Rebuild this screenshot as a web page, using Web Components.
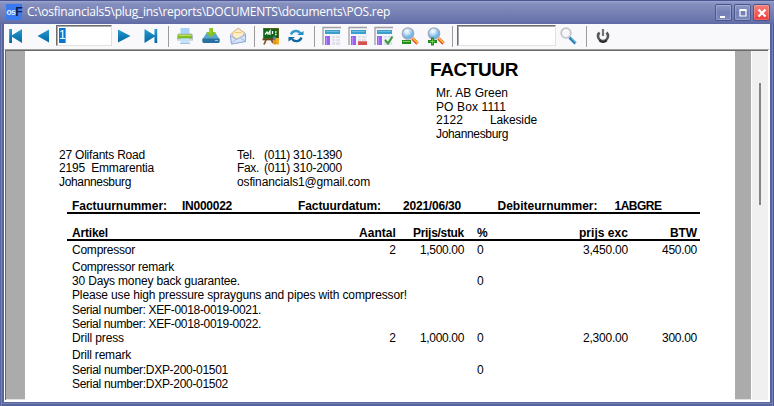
<!DOCTYPE html>
<html lang="nl">
<head>
<meta charset="utf-8">
<title>POS.rep</title>
<style>
html,body{margin:0;width:774px;height:406px;overflow:hidden;background:#fff}
body{font-family:"Liberation Sans",Arial,sans-serif;font-size:12px;color:#000}
</style>
</head>
<body>
<report-window></report-window>
<script>
const define = (name, html, setup) => customElements.define(name, class extends HTMLElement {
  connectedCallback() {
    if (this.shadowRoot) return;
    this.attachShadow({mode: 'open'}).innerHTML = typeof html === 'function' ? html(this) : html;
    if (setup) setup(this);
  }
});

/* Text that spreads its letters to fill the width in its "w" attribute */
define('fit-text', '<style>:host{display:block;width:max-content;white-space:pre}span{display:inline-block}</style><span><slot></slot></span>', el => {
  const w = +el.getAttribute('w');
  if (!w) return;
  const span = el.shadowRoot.querySelector('span');
  const n = el.textContent.length;
  const ls = (w - span.getBoundingClientRect().width) / n;
  span.style.letterSpacing = ls.toFixed(3) + 'px';
});

const blue = '<defs><linearGradient id="b" x2="0" y2="1"><stop stop-color="#2a9dcf"/><stop offset=".5" stop-color="#137fb9"/><stop offset="1" stop-color="#07679f"/></linearGradient></defs>';
const table = '<path d="M1 2h18v17H1z" fill="#f4f5fa"/><path d="M1 19V1.500H19" fill="none" stroke="#a0a0a4" stroke-width="1.300"/><path d="M3 4h15v4H3z" fill="#3b9fce"/><path d="M4 5.500h13" stroke="#6cbade"/><path d="M3 10h5v9H3z" fill="#9a62f0"/><path d="M4.500 11v8" stroke="#b78cfa"/><path d="M10 10h8v9h-8z" fill="#dfe1eb"/><path d="M10 12.500h8M10 15.500h8M13.500 10v9" stroke="#f3f3fa"/>';
const glass = '<defs><radialGradient id="g" cx=".4" cy=".3"><stop stop-color="#fff"/><stop offset=".6" stop-color="#b8dcf8"/><stop offset="1" stop-color="#76b5e8"/></radialGradient></defs><path d="M12.500 12.500l5 5" stroke="#e65327" stroke-width="3.300"/><path d="M12.500 11.800l5.300 5.300" stroke="#f8c23f" stroke-width="1.600"/><circle cx="8" cy="7.500" r="5.700" fill="url(#g)" stroke="#a3a9ba" stroke-width="1.300"/>';
const icons = {
  first: blue + '<path d="M3.200 3H6v6.200L16 3v14L6 10.800V17H3.200z" fill="url(#b)"/>',
  prev: blue + '<path d="M16 3.500v13L4.500 10z" fill="url(#b)"/>',
  next: blue + '<path d="M4 3.500v13L16.500 10z" fill="url(#b)"/>',
  last: blue + '<path d="M3.500 3l10 6.200V3h2.700v14h-2.700v-6.200L3.500 17z" fill="url(#b)"/>',
  print: '<path d="M5.500 2h9v6h-9z" fill="#a9d2f6"/><path d="M3.500 7.500h13L18 9v5.500H2V9z" fill="#b5bdc2"/><path d="M3 8.500h14v4H3z" fill="#82be22"/><path d="M3.500 9.500h13" stroke="#b9e35c"/><path d="M2.500 13.500h15" stroke="#d0d6da"/><path d="M5.500 12.500h9V17h-9z" fill="#c3e1fb"/><path d="M5 17.500h10" stroke="#9dc4e4"/>',
  save: '<path d="M5.500 7h9l4 6v3l-1 1h-15l-1-1v-3z" fill="#5fa6cf"/><path d="M1.500 12.500h17V16l-1 1h-15l-1-1z" fill="#2a6f9f"/><path d="M14 14.500h3" stroke="#83ccea"/><path d="M8 2h4v4h3L10 11.500 5 6h3z" fill="#86c41c"/><path d="M9 2.500v5" stroke="#a5dc3c"/>',
  mail: '<path d="M2.500 8.500L10 2l7.500 5.500v8L3.500 18z" fill="#dce7fb" stroke="#a7b6dd"/><path d="M4.500 6.500L10 2.500l6 4-1 4-5 3-5-2.500z" fill="#fdeecb" stroke="#e9bd78"/><path d="M6.500 6.500h7" stroke="#f4c777"/><path d="M2.500 9.500l6 4 9-5v7l-14 2.500z" fill="#d5e4fb" stroke="#93abdc"/><path d="M3.500 17l5-4M17 15l-5-3.500" stroke="#a6b9e2"/>',
  board: '<path d="M5 14l-2 4.500M10 13l2 4" stroke="#8b561f" stroke-width="1.800"/><path d="M2 2h16v12H2z" fill="#94611e"/><path d="M3 2.500h14.500v10H3z" fill="#10651d"/><path d="M4 8.500l2-2.500 1 2 2-3v4M11.500 5v3M14 6h1.500M14 8.500h1.500" fill="none" stroke="#f3fff0" stroke-width="1.300"/><path d="M1.500 13.500h11" stroke="#674019" stroke-width="1.600"/><path d="M12 12h6v6.500h-6z" fill="#efaf25"/><path d="M12 10.500h2.500V14H12z" fill="#6877ac"/><path d="M14 13v5" stroke="#b97718"/>',
  refresh: '<path d="M5 8.500a5.300 5.300 0 0 1 9.500-1" fill="none" stroke="#3298ca" stroke-width="2.300"/><path d="M11 9h6.500V5z" fill="#248bc1"/><path d="M15.500 11.500a5.500 5.500 0 0 1-9.500 1.500" fill="none" stroke="#10689f" stroke-width="2.300"/><path d="M9 11H2.500v4.500z" fill="#116da5"/>',
  table1: table,
  table2: table + '<path d="M10 15h9v4h-9z" fill="#d84d50"/><path d="M10 15.500h9" stroke="#e47c79"/>',
  table3: table + '<path d="M11 14l3 3.500 4.500-7" fill="none" stroke="#389b38" stroke-width="2"/>',
  zoomout: glass + '<path d="M2 14h9v4H2z" fill="#268d23"/><path d="M3 15.500h7" stroke="#82d262"/>',
  zoomin: glass + '<path d="M5 11.500h3V14h3v3H8v2.500H5V17H2v-3h3z" fill="#218b22"/><path d="M6.500 13v5M4 15.500h5" stroke="#6bc950"/>',
  search: '<path d="M11.500 11.500l6 6" stroke="#267fb0" stroke-width="3"/><path d="M13 12l5 5" stroke="#65badd"/><circle cx="8" cy="7" r="4.800" fill="#f5f6f9" stroke="#c2c5ca" stroke-width="1.800"/><path d="M5.500 6a3 3 0 0 1 3-2" stroke="#fff" fill="none"/>',
  power: '<path d="M6.500 6.500a5 5 0 1 0 7 0" fill="none" stroke="#55585a" stroke-width="2.600"/><path d="M6.500 14.500a5 5 0 0 0 7 0" fill="none" stroke="#252728" stroke-width="2"/><path d="M10 3.500v7" stroke="#fafafc" stroke-width="4"/><path d="M10 3v7" stroke="#707375" stroke-width="2.200"/>'
};
define('tool-icon', el => `<style>:host{display:block;width:20px;height:20px;flex:none}svg{display:block}</style><svg width="20" height="20" viewBox="0 0 20 20">${icons[el.getAttribute('name')]}</svg>`);
define('tool-sep', '<style>:host{display:block;width:1px;height:21px;background:#9b9b9d;flex:none}</style>');
define('tool-field', '<style>:host{display:block;box-sizing:border-box;height:21px;background:#fff;border:1px solid;border-color:#6d6d6d #e0e0e0 #e0e0e0 #6d6d6d;box-shadow:inset 1px 1px #aaa;flex:none;padding:2px 0 0 2px;font-size:12px}div{display:flex}</style><div><slot></slot></div>');

define('title-button', el => {
  const k = el.getAttribute('kind');
  const glyph = {min: '<path d="M4 11h5v2H4z" fill="#fff"/>', max: '<path d="M5 5.500h6V11H5z" fill="none" stroke="#fff" stroke-width="1.200"/><path d="M4.500 5h7" stroke="#fff" stroke-width="2"/>', close: '<path d="M4.500 4.500l7 7m0-7l-7 7" stroke="#fff" stroke-width="2.200"/>'}[k];
  const bg = k === 'close' ? 'linear-gradient(#f58078,#f4655f 45%,#ec3b38)' : 'linear-gradient(#8f99c4,#7380b6 50%,#7b88bd)';
  return `<style>:host{display:block;box-sizing:border-box;width:17px;height:17px;border:1px solid #4c5790;border-radius:2px;background:${bg};box-shadow:inset 0 0 0 1px rgba(255,255,255,.2);flex:none}svg{display:block;margin:-.5px 0 0 -.5px}</style><svg width="16" height="16">${glyph}</svg>`;
});

define('title-bar', `<style>
:host{display:flex;box-sizing:border-box;height:24px;align-items:flex-start;background:linear-gradient(#4d5793 0 1px,#98a1cb 1px 2px,#8791c0 3px,#7983b5 11px,#6873ab 21px,#5f6aa5 24px);color:#fff;padding:4px 4px 0 6px}
.logo{width:16px;height:16px;background:#397af0;display:flex;align-items:center;justify-content:center;font:bold 9px/16px "Liberation Sans",sans-serif;letter-spacing:-.8px;color:#dfeaff}
.logo b{font-size:12px;color:#10194c}
fit-text{font:12px/16px "Open Sans","Noto Sans",sans-serif;margin-left:5px}
.b{display:flex;gap:2px;margin-left:auto}
</style><div class="logo">os<b>F</b></div><fit-text w="363">C:\\osfinancials5\\plug_ins\\reports\\DOCUMENTS\\documents\\POS.rep</fit-text><div class="b"><title-button kind="min"></title-button><title-button kind="max"></title-button><title-button kind="close"></title-button></div>`);

const i = (name, gap) => `<tool-icon name="${name}" style="margin-left:${gap}px"></tool-icon>`;
const s = gap => `<tool-sep style="margin-left:${gap}px"></tool-sep>`;
define('tool-bar', `<style>:host{display:flex;box-sizing:border-box;height:25px;background:#f9f9fc;align-items:flex-start;padding:2px 0 0 2px}
tool-field{margin-top:-1px}.sel{background:#0a74d1;color:#fff;width:6px;height:15px;line-height:15px;border-right:1px solid #ed8b3a}</style>
${i('first',0)}${i('prev',7)}<tool-field style="width:56px;margin-left:3px"><div class="sel">1</div></tool-field>${i('next',2)}${i('last',7)}${s(7)}${i('print',6)}${i('save',6)}${i('mail',7)}${s(6)}${i('board',6)}${i('refresh',5)}${s(8)}${i('table1',7)}${i('table2',6)}${i('table3',6)}${i('zoomout',6)}${i('zoomin',6)}${s(6)}<tool-field style="width:99px;margin-left:4px"></tool-field>${i('search',2)}${s(8)}${i('power',6)}`);

/* One invoice row: cells for item, quantity, price, percentage, total and VAT */
define('item-row', `<style>:host{display:grid;grid-template-columns:200px 124px 68px 13px 151px 69px;height:var(--h,14px);line-height:14px;align-items:start}
::slotted(.r){justify-self:end}::slotted(.p){grid-column:4;justify-self:start;margin-left:13px}</style><slot></slot>`);

define('invoice-page', `<style>
:host{display:block;box-sizing:border-box;background:#fff;width:710px;height:349px;line-height:14px;padding-top:8px}
h1{font-size:19px;line-height:22px;height:27px;margin:0 0 0 405px}
.cust{margin-left:411px;height:62px;display:grid;grid-template-rows:14px 13px 14px 14px}
.pair{display:flex}
.addr{display:grid;grid-template-columns:178px 27px auto;grid-template-rows:13px 14px 14px;margin-left:34px;height:51px}
.meta{display:grid;grid-template-columns:110px 116px 105px 94.500px 117px auto;margin-left:42px;padding-left:5px;width:628px;height:13px;border-bottom:2px solid #000;font-weight:bold}
.mail{grid-column:2/4}
.head{margin-left:42px;padding:12px 0 0 5px;width:628px;border-bottom:2px solid #000;height:13px;font-weight:bold}
.rows{margin:2px 0 0 47px}
</style>
<h1><fit-text w="88">FACTUUR</fit-text></h1>
<div class="cust"><fit-text w="72">Mr. AB Green</fit-text><fit-text w="70">PO Box 1111</fit-text><div class="pair"><fit-text w="27" style="margin-right:27px">2122</fit-text><fit-text w="47">Lakeside</fit-text></div><fit-text w="72">Johannesburg</fit-text></div>
<div class="addr"><fit-text w="86">27 Olifants Road</fit-text><fit-text w="18">Tel.</fit-text><fit-text w="78">(011) 310-1390</fit-text><fit-text w="95">2195  Emmarentia</fit-text><fit-text w="22">Fax.</fit-text><fit-text w="78">(011) 310-2000</fit-text><fit-text w="72">Johannesburg</fit-text><fit-text w="133" class="mail">osfinancials1@gmail.com</fit-text></div>
<div class="meta"><fit-text w="95">Factuurnummer:</fit-text><fit-text w="50">IN000022</fit-text><fit-text w="83">Factuurdatum:</fit-text><fit-text w="58">2021/06/30</fit-text><fit-text w="100">Debiteurnummer:</fit-text><fit-text w="47">1ABGRE</fit-text></div>
<div class="head"><item-row><fit-text w="36">Artikel</fit-text><fit-text class="r" w="37">Aantal</fit-text><fit-text class="r" w="51">Prijs/stuk</fit-text><fit-text class="p" w="9">%</fit-text><fit-text class="r" w="49">prijs exc</fit-text><fit-text class="r" w="27">BTW</fit-text></item-row></div>
<div class="rows">
<item-row style="--h:17px"><fit-text w="63">Compressor</fit-text><fit-text class="r">2</fit-text><fit-text class="r" w="44">1,500.00</fit-text><fit-text class="p">0</fit-text><fit-text class="r" w="45">3,450.00</fit-text><fit-text class="r" w="35">450.00</fit-text></item-row>
<item-row><fit-text w="102">Compressor remark</fit-text></item-row>
<item-row><fit-text w="168">30 Days money back guarantee.</fit-text><fit-text class="p">0</fit-text></item-row>
<item-row style="--h:15px"><fit-text w="335">Please use high pressure sprayguns and pipes with compressor!</fit-text></item-row>
<item-row><fit-text w="189">Serial number: XEF-0018-0019-0021.</fit-text></item-row>
<item-row><fit-text w="189">Serial number: XEF-0018-0019-0022.</fit-text></item-row>
<item-row style="--h:17px"><fit-text w="52">Drill press</fit-text><fit-text class="r">2</fit-text><fit-text class="r" w="44">1,000.00</fit-text><fit-text class="p">0</fit-text><fit-text class="r" w="45">2,300.00</fit-text><fit-text class="r" w="35">300.00</fit-text></item-row>
<item-row style="--h:15px"><fit-text w="59">Drill remark</fit-text></item-row>
<item-row><fit-text w="156">Serial number:DXP-200-01501</fit-text><fit-text class="p">0</fit-text></item-row>
<item-row><fit-text w="156">Serial number:DXP-200-01502</fit-text></item-row>
</div>`);

define('scroll-strip', '<style>:host{display:block;box-sizing:border-box;width:17px;border-left:1px solid #fff;background:#f0f0f0;padding:32px 0 0 7px}div{width:2px;height:122px;background:#858585}</style><div></div>');

define('report-window', `<style>
:host{display:flex;flex-direction:column;width:774px;height:406px;background:#5f6aa5}
.body{display:flex;flex-direction:column;box-sizing:border-box;height:382px;padding:0 4px 4px;background:linear-gradient(#5a659f,#5a659f) 0 0/1px 100% no-repeat,linear-gradient(#7783b7,#7783b7) 1px 0/1px 100% no-repeat,linear-gradient(#4c5791,#4c5791) 773px 0/1px 100% no-repeat,linear-gradient(#7985ba,#7985ba) 772px 0/1px 100% no-repeat,linear-gradient(#5c68a2,#5c68a2) 0 378px/100% 1px no-repeat,linear-gradient(#7480b2,#7480b2) 0 379px/100% 1px no-repeat,#57639d}
.view{display:flex;box-sizing:border-box;width:766px;height:353px;border-style:solid;border-width:1px 2px 2px 1px;border-color:#a0a0a0 #fff #fff #fff;padding-top:1px;background:#ababab;box-shadow:inset 1px 1px #696969,inset 0 -1px #e3e3e3}
invoice-page{margin-left:20px}scroll-strip{margin-left:16px}
</style><title-bar></title-bar><div class="body"><tool-bar></tool-bar><div class="view"><invoice-page></invoice-page><scroll-strip></scroll-strip></div></div>`);
</script>
</body>
</html>
